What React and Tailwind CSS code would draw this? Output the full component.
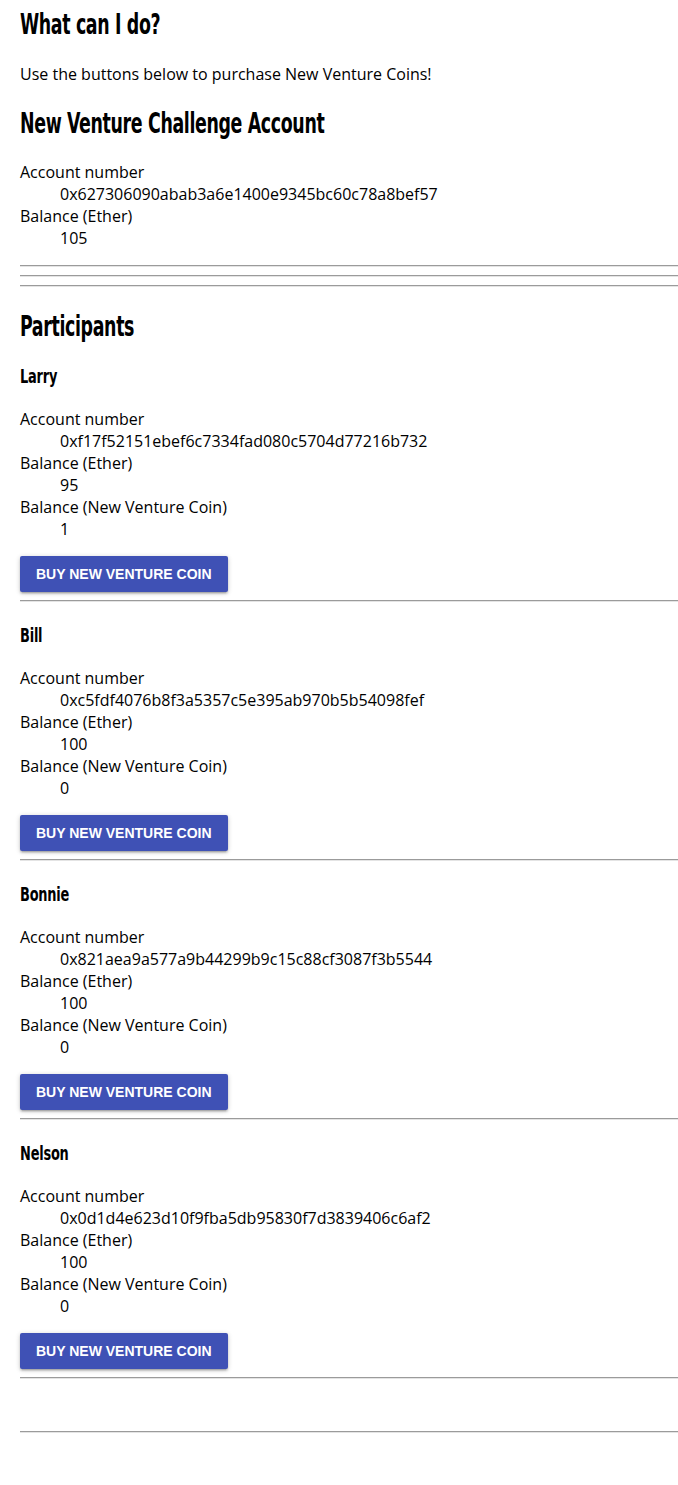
const participants = [
  { name: "Larry", account: "0xf17f52151ebef6c7334fad080c5704d77216b732", ether: "95", coin: "1" },
  { name: "Bill", account: "0xc5fdf4076b8f3a5357c5e395ab970b5b54098fef", ether: "100", coin: "0" },
  { name: "Bonnie", account: "0x821aea9a577a9b44299b9c15c88cf3087f3b5544", ether: "100", coin: "0" },
  { name: "Nelson", account: "0x0d1d4e623d10f9fba5db95830f7d3839406c6af2", ether: "100", coin: "0" }
];

// Oswald-ish look: condensed bold, squeezed horizontally
const heading = "origin-left font-['DejaVu_Sans_Condensed','DejaVu_Sans',sans-serif] font-stretch-condensed font-bold text-black";
const h2 = `${heading} scale-x-[0.69] text-[28px] leading-[32px] tracking-[-0.5px]`;
const h3 = `${heading} scale-x-[0.72] text-[20px] leading-[24px] tracking-[-0.3px]`;

function Rule({ className = "" }) {
  return <div className={`h-[2px] border-t border-t-[#9b9b9b] border-b border-b-[#e4e4e4] ${className}`} />;
}

function Field({ label, value }) {
  return (
    <>
      <dt className="leading-[22px]">{label}</dt>
      <dd className="ml-10 leading-[22px]">{value}</dd>
    </>
  );
}

export default function App() {
  return (
    <div className="min-h-[1485px] bg-white pl-5 pt-[9px] text-[16px] text-black font-['Open_Sans',sans-serif]">

      <h2 className={h2}>What can I do?</h2>

      <p className="mt-[22px] leading-[22px]">Use the buttons below to purchase New Venture Coins!</p>

      <h2 className={`${h2} mt-[23px]`}>New Venture Challenge Account</h2>

      <dl className="mt-[21px]">
        <Field label="Account number" value="0x627306090abab3a6e1400e9345bc60c78a8bef57" />
        <Field label="Balance (Ether)" value="105" />
      </dl>

      <Rule className="mt-4" />
      <Rule className="mt-2" />
      <Rule className="mt-2" />

      <h2 className={`${h2} mt-[24px]`}>Participants</h2>

      {participants.map((p) => (
        <div key={p.name}>
          <h3 className={`${h3} mt-[21px]`}>
            {p.name}
          </h3>

          <dl className="mt-5">
            <Field label="Account number" value={p.account} />
            <Field label="Balance (Ether)" value={p.ether} />
            <Field label="Balance (New Venture Coin)" value={p.coin} />
          </dl>

          <button className="mt-4 h-9 rounded-[2px] bg-[#3f51b5] px-4 text-[14px] font-bold uppercase text-white font-['Liberation_Sans',Arial,sans-serif] shadow-[0_1px_5px_0_rgba(0,0,0,0.2),0_2px_2px_0_rgba(0,0,0,0.14),0_3px_1px_-2px_rgba(0,0,0,0.12)]">
            Buy New Venture Coin
          </button>

          <Rule className="mt-2" />
        </div>
      ))}

      <Rule className="mt-[52px]" />

    </div>
  );
}
